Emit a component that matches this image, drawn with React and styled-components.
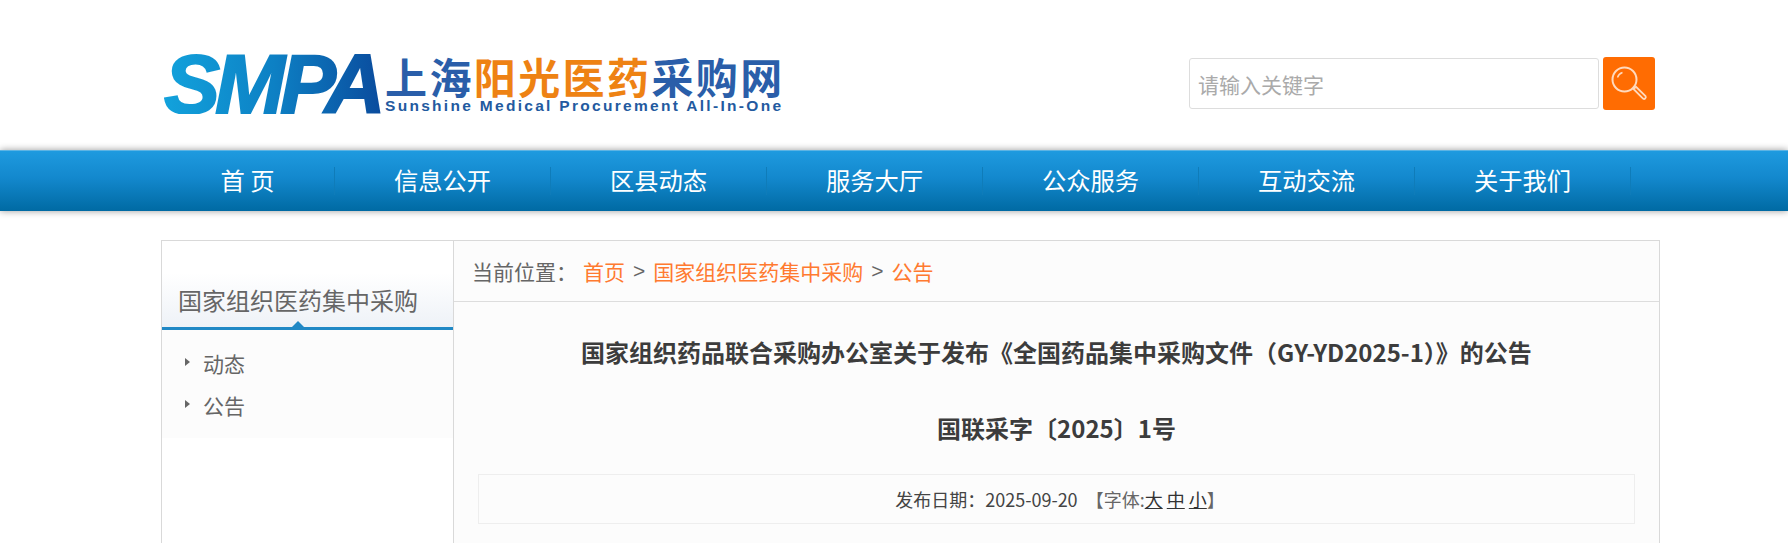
import styled, { createGlobalStyle } from "styled-components";

const NAV_ITEMS = ["信息公开", "区县动态", "服务大厅", "公众服务", "互动交流", "关于我们"];
const SIDE_ITEMS = ["动态", "公告"];

const App = () => {
  return (
    <>
      <GlobalStyle />
      <Header>
        <Logo>
          <LogoMark>SMPA</LogoMark>
          <LogoText>
            <LogoTitle>
              上海<em>阳光医药</em>采购网
            </LogoTitle>
            <LogoSub>Sunshine Medical Procurement All-In-One</LogoSub>
          </LogoText>
        </Logo>
        <Search>
          <SearchInput placeholder="请输入关键字" />
          <SearchButton aria-label="search">
            <svg width="40" height="40" viewBox="0 0 40 40" fill="none">
              <circle cx="15.5" cy="15.5" r="12" stroke="#ffd9bd" strokeWidth="2" />
              <path d="M8.5 13.5a7.5 7.5 0 0 1 5-5" stroke="#ffd9bd" strokeWidth="1.4" />
              <path d="M24.5 25l2.5-2.2 9.5 9.3a1.8 1.8 0 0 1-2.5 2.5z" stroke="#ffd9bd" strokeWidth="1.8" />
            </svg>
          </SearchButton>
        </Search>
      </Header>
      <Nav>
        <NavInner>
          <HomeItem>首 页</HomeItem>
          {NAV_ITEMS.map((item) => (
            <NavItem key={item}>{item}</NavItem>
          ))}
        </NavInner>
      </Nav>
      <Main>
        <Side>
          <SideTitle>国家组织医药集中采购</SideTitle>
          <SideList>
            {SIDE_ITEMS.map((item) => (
              <SideItem key={item}>{item}</SideItem>
            ))}
          </SideList>
        </Side>
        <Content>
          <Crumbs>
            <CrumbLabel>当前位置：</CrumbLabel>
            <Crumb>首页</Crumb>
            <CrumbSep>&gt;</CrumbSep>
            <Crumb>国家组织医药集中采购</Crumb>
            <CrumbSep>&gt;</CrumbSep>
            <Crumb>公告</Crumb>
          </Crumbs>
          <Article>
            <Title>国家组织药品联合采购办公室关于发布《全国药品集中采购文件（GY-YD2025-1）》的公告</Title>
            <Title>国联采字〔2025〕1号</Title>
            <Meta>
              发布日期：2025-09-20&nbsp;&nbsp;
              <MetaGrey>
                【字体:<u>大</u> <u>中</u> <u>小</u>】
              </MetaGrey>
            </Meta>
          </Article>
        </Content>
      </Main>
    </>
  );
};

export default App;

const GlobalStyle = createGlobalStyle`
  html, body {
    margin: 0;
    height: 543px;
    overflow: hidden;
    background: #fff;
    font-family: "Noto Sans CJK SC", "Noto Sans", sans-serif;
  }
`;

const Header = styled.header`
  height: 150px;
  padding: 0 133px 0 164px;
  box-sizing: border-box;
  display: flex;
  align-items: center;
  justify-content: space-between;
`;

const Logo = styled.div`
  display: flex;
  height: 60px;
  margin-top: 18px;
`;

const LogoMark = styled.div`
  width: 221px;
  font-family: "Liberation Sans", sans-serif;
  font-weight: 700;
  font-style: italic;
  font-size: 84px;
  line-height: 60px;
  letter-spacing: -5px;
  -webkit-text-stroke: 2px transparent;
  background: linear-gradient(90deg, #12a2dc 0%, #0d80c4 50%, #0a4a9c 100%);
  -webkit-background-clip: text;
  background-clip: text;
  color: transparent;
`;

const LogoText = styled.div`
  display: flex;
  flex-direction: column;
`;

const LogoTitle = styled.div`
  font-weight: 700;
  font-size: 42px;
  line-height: 43px;
  letter-spacing: 2.4px;
  white-space: nowrap;
  color: #2a5ea9;
  em {
    font-style: normal;
    color: #ee8213;
  }
`;

const LogoSub = styled.div`
  font-family: "Liberation Sans", sans-serif;
  font-weight: 700;
  font-size: 15.5px;
  line-height: 17px;
  letter-spacing: 2.3px;
  white-space: nowrap;
  color: #235a9f;
`;

const Search = styled.div`
  display: flex;
  align-items: center;
  gap: 4px;
  margin-top: 17px;
`;

const SearchInput = styled.input`
  width: 410px;
  height: 51px;
  box-sizing: border-box;
  padding: 0 8px;
  border: 1px solid #ddd;
  border-radius: 3px;
  outline: none;
  font-family: inherit;
  font-size: 21px;
  &::placeholder {
    color: #aaa;
  }
`;

const SearchButton = styled.button`
  width: 52px;
  height: 53px;
  padding: 0;
  border: 0;
  border-radius: 3px;
  background: #ff6c02;
  display: flex;
  align-items: center;
  justify-content: center;
`;

const Nav = styled.nav`
  height: 61px;
  background: linear-gradient(180deg, #1e9adf 0%, #1388cd 45%, #006aa3 100%);
  border-top: 1px solid #5db4e4;
  box-sizing: border-box;
  box-shadow: 0 0 7px rgba(0, 0, 0, 0.4);
`;

const NavInner = styled.div`
  display: flex;
  padding-left: 161px;
  height: 100%;
  align-items: center;
`;

const NavItem = styled.div`
  width: 216px;
  height: 28px;
  line-height: 25px;
  text-align: center;
  color: #fff;
  font-size: 24.3px;
  border-right: 1px solid #0f7cb9;
  box-sizing: border-box;
`;

const HomeItem = styled(NavItem)`
  width: 174px;
`;

const Main = styled.main`
  display: flex;
  width: 1499px;
  height: 303px;
  margin: 29px 0 0 161px;
  box-sizing: border-box;
  border: 1px solid #d9d9d9;
  border-bottom: 0;
`;

const Side = styled.aside`
  width: 291px;
  flex-shrink: 0;
  border-right: 1px solid #d9d9d9;
`;

const SideTitle = styled.h2`
  position: relative;
  margin: 32px 0 0;
  height: 54px;
  padding-left: 16px;
  font-weight: 400;
  font-size: 24px;
  line-height: 54px;
  color: #666;
  background: linear-gradient(180deg, #ffffff 0%, #eef2f7 100%);
  border-bottom: 3px solid #2088c5;
  &::after {
    content: "";
    position: absolute;
    left: 130px;
    bottom: 0;
    border: 6px solid transparent;
    border-top: 0;
    border-bottom-color: #2088c5;
  }
`;

const SideList = styled.ul`
  margin: 0;
  padding: 13px 0 11px;
  list-style: none;
  background: #fcfcfc;
`;

const SideItem = styled.li`
  position: relative;
  height: 42px;
  line-height: 40px;
  padding-left: 41px;
  font-size: 21px;
  color: #666;
  &::before {
    content: "";
    position: absolute;
    left: 23px;
    top: 15px;
    border: 4.5px solid transparent;
    border-right: 0;
    border-left: 5.5px solid #666;
  }
`;

const Content = styled.section`
  flex: 1;
  background: #fcfcfc;
`;

const Crumbs = styled.div`
  display: flex;
  align-items: center;
  height: 61px;
  box-sizing: border-box;
  padding-left: 18px;
  font-size: 21px;
  color: #666;
  border-bottom: 1px solid #ddd;
`;

const CrumbLabel = styled.span`
  margin-right: 6px;
`;

const Crumb = styled.span`
  color: #ff7a30;
`;

const CrumbSep = styled.span`
  margin: 0 8px;
  font-family: "Liberation Sans", sans-serif;
`;

const Article = styled.article`
  padding: 12px 24px 0;
`;

const Title = styled.h1`
  margin: 0;
  height: 76px;
  line-height: 76px;
  text-align: center;
  font-size: 24px;
  font-weight: 700;
  color: #3c3c3c;
  white-space: nowrap;
`;

const Meta = styled.div`
  margin-top: 8px;
  height: 50px;
  padding-left: 7px;
  line-height: 48px;
  box-sizing: border-box;
  border: 1px solid #eee;
  text-align: center;
  font-size: 18px;
  color: #444;
`;

const MetaGrey = styled.span`
  color: #666;
  u {
    color: #333;
  }
`;
